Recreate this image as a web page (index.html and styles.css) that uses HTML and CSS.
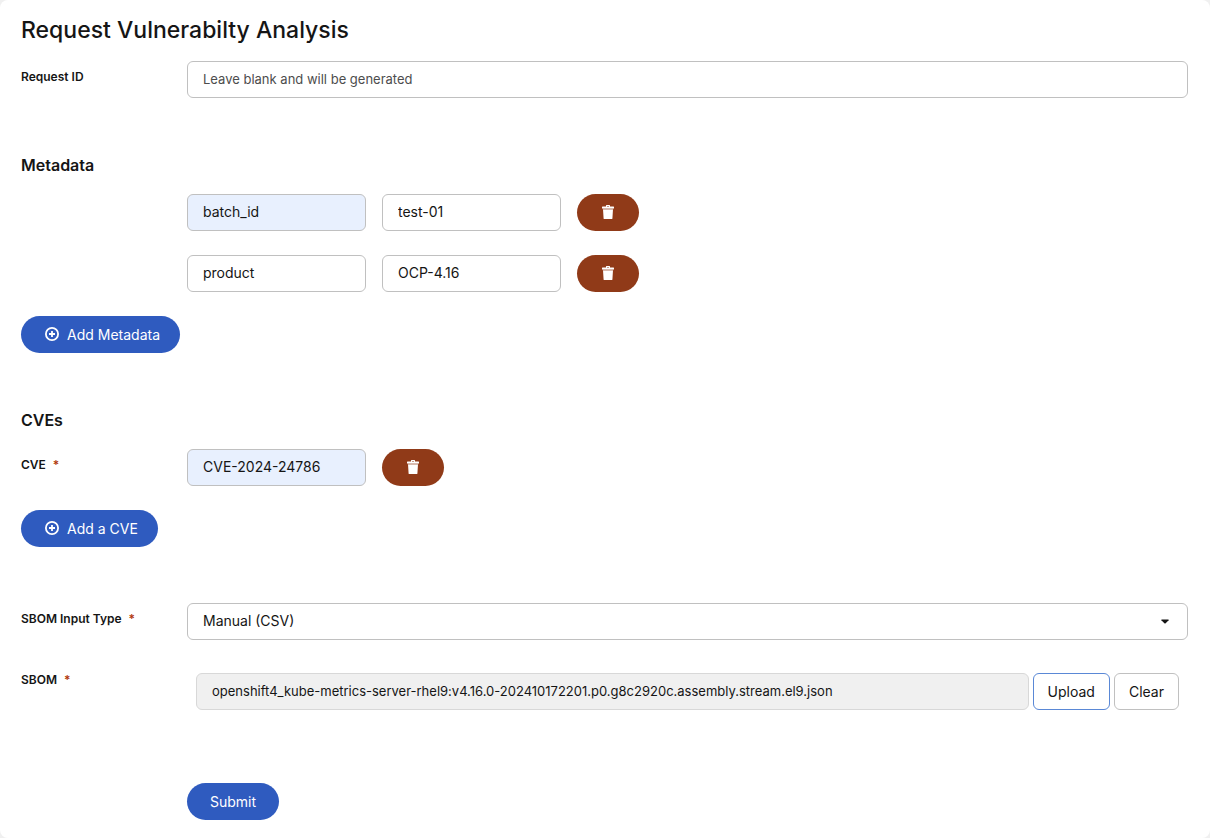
FILE: index.html
```html
<!DOCTYPE html>
<html lang="en">
<head>
<meta charset="utf-8">
<meta name="viewport" content="width=device-width, initial-scale=1">
<title>Request Vulnerability Analysis</title>
<link rel="stylesheet" href="styles.css">
</head>
<body>
<svg class="sprite" aria-hidden="true">
  <symbol id="trash" viewBox="0 0 12 14"><path fill-rule="evenodd" d="M4 1.500V.600Q4 0 4.600 0h2.800Q8 0 8 .600v.900h3.600q.4 0 .4.400V3.500H0V1.900q0-.4.400-.4zM5 .900v.600h2V.900z"/><path opacity=".6" d="M.8 3.500h10.400v1H.8z"/><path d="M1 4.400h10l-.6 9q-.1.600-.7.600H2.300q-.6 0-.7-.6z"/></symbol>
  <symbol id="plus" viewBox="0 0 14 14"><g fill="none" stroke="currentColor" stroke-width="1.800"><circle cx="7" cy="7" r="6.100"/><path d="M7 4v6M4 7h6"/></g></symbol>
</svg>
<main class="page">
  <h1 class="title">Request Vulnerabilty Analysis</h1>
  <form class="form">
    <div class="row">
      <label class="label" for="request-id">Request ID</label>
      <input class="field long" id="request-id" type="text" placeholder="Leave blank and will be generated">
    </div>

    <section class="section">
      <h2 class="heading">Metadata</h2>
      <div class="row">
        <div class="group">
          <input class="field short filled" type="text" value="batch_id" aria-label="Name 1">
          <input class="field short" type="text" value="test-01" aria-label="Value 1">
          <button class="button danger" type="button" aria-label="Remove batch_id"><svg class="trash"><use href="#trash"/></svg></button>
        </div>
      </div>
      <div class="row">
        <div class="group">
          <input class="field short" type="text" value="product" aria-label="Name 2">
          <input class="field short" type="text" value="OCP-4.16" aria-label="Value 2">
          <button class="button danger" type="button" aria-label="Remove product"><svg class="trash"><use href="#trash"/></svg></button>
        </div>
      </div>
      <button class="button primary add" type="button"><svg class="plus"><use href="#plus"/></svg>Add Metadata</button>
    </section>

    <section class="section">
      <h2 class="heading">CVEs</h2>
      <div class="row">
        <label class="label" for="cve">CVE<span class="required">*</span></label>
        <div class="group">
          <input class="field short filled" id="cve" type="text" value="CVE-2024-24786">
          <button class="button danger" type="button" aria-label="Remove CVE"><svg class="trash"><use href="#trash"/></svg></button>
        </div>
      </div>
      <button class="button primary add" type="button"><svg class="plus"><use href="#plus"/></svg>Add a CVE</button>
    </section>

    <section class="section">
      <div class="row">
        <label class="label" for="input-type">SBOM Input Type<span class="required">*</span></label>
        <div class="select">
          <select class="field" id="input-type"><option>Manual (CSV)</option></select>
          <svg class="caret" viewBox="0 0 10 5" aria-hidden="true"><path d="M1 0h8q1 0 .5.800L5.800 4.600q-.800.700-1.600 0L.5.800Q0 0 1 0z"/></svg>
        </div>
      </div>
      <div class="row">
        <label class="label" for="sbom">SBOM<span class="required">*</span></label>
        <div class="upload">
          <input class="field long file" id="sbom" type="text" readonly value="openshift4_kube-metrics-server-rhel9:v4.16.0-202410172201.p0.g8c2920c.assembly.stream.el9.json">
          <button class="control active" type="button">Upload</button>
          <button class="control" type="button">Clear</button>
        </div>
      </div>
    </section>

    <div class="row actions">
      <button class="button primary" type="submit">Submit</button>
    </div>
  </form>
</main>
</body>
</html>
```
FILE: styles.css
```css
* { box-sizing: border-box; }
body {
  margin: 0;
  background: #f0f0f0;
  color: #151515;
  font: 14px/21px Inter, "Liberation Sans", sans-serif;
}
.sprite { position: absolute; width: 0; height: 0; }
.page {
  min-height: 100vh;
  padding: 14px 22px 18px 21px;
  border-radius: 8px;
  background: #fff;
}
.title { margin: 0 0 14px; font-size: 23px; line-height: 33px; font-weight: 500; }
.form { display: flex; flex-direction: column; gap: 56px; }
.row {
  display: grid;
  grid-template-columns: 150px minmax(0, 1fr);
  column-gap: 16px;
  align-items: start;
}
.row > :not(.label) { grid-column: 2; }
.row > .button { justify-self: start; }
.label { padding-top: 7px; font-size: 12px; line-height: 18px; font-weight: 600; }
.required { margin-left: 7px; color: #b1380b; }
.field {
  width: 100%;
  height: 37px;
  padding: 0 15px 2px;
  border: 1px solid #c0c0c0;
  border-radius: 6px;
  background: #fff;
  color: #151515;
  font: inherit;
}
.field::placeholder { color: #4d4d4d; opacity: 1; }
.short { width: 179px; }
.long { font-size: 13px; }
.filled { background: #e8f0fe; }
.section { display: flex; flex-direction: column; gap: 24px; }
.section > .button { align-self: flex-start; }
.heading { margin: 0 0 -7px; font-size: 16px; line-height: 23px; font-weight: 600; }
.group { display: flex; gap: 16px; }
.button {
  display: inline-flex;
  align-items: center;
  justify-content: center;
  height: 37px;
  padding: 0 23px 1px;
  border: 0;
  border-radius: 19px;
  color: #fff;
  font: inherit;
}
.primary { background: #2f5bbf; }
.add { padding: 0 20px 1px 24px; }
.danger { width: 62px; background: #903a18; }
.trash { width: 12px; height: 14px; fill: currentColor; }
.plus { width: 14px; height: 14px; margin-right: 8px; }
.select { position: relative; }
.select .field { display: block; appearance: none; }
.caret { position: absolute; right: 19px; top: 16px; width: 8px; height: 5px; fill: #151515; }
.upload { display: flex; gap: 4px; padding: 9px; }
.upload .field { flex: 1; width: auto; min-width: 0; }
.file { background: #f0f0f0; border-color: #d8d8d8; }
.control {
  height: 37px;
  padding: 0 14px 1px;
  border: 1px solid #c0c0c0;
  border-radius: 6px;
  background: #fff;
  color: #151515;
  font: inherit;
}
.active { border-color: #5a88d6; }
.actions { margin-top: 8px; }
```
